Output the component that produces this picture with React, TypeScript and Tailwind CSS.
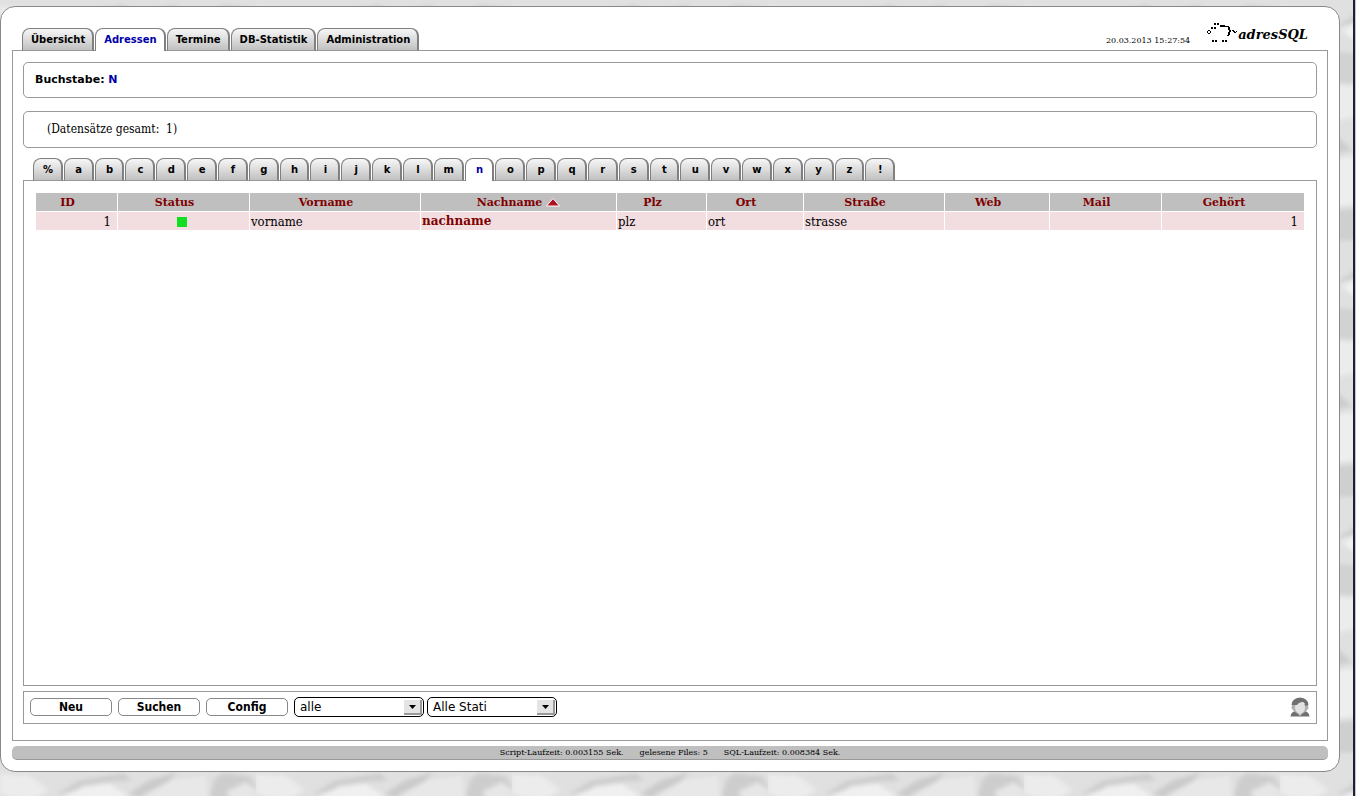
const mainTabs = ['Übersicht', 'Adressen', 'Termine', 'DB-Statistik', 'Administration'];
const letters = ['%', ...'abcdefghijklmnopqrstuvwxyz', '!'];

const columns = [
    { label: 'ID', width: 'w-[81px]' },
    { label: 'Status', width: 'w-[131px]' },
    { label: 'Vorname', width: 'w-[170px]' },
    { label: 'Nachname', width: 'w-[195px]' },
    { label: 'Plz', width: 'w-[89px]' },
    { label: 'Ort', width: 'w-[96px]' },
    { label: 'Straße', width: 'w-[140px]' },
    { label: 'Web', width: 'w-[104px]' },
    { label: 'Mail', width: 'w-[111px]' },
    { label: 'Gehört', width: 'w-[142px]' },
];

const sans = "font-['DejaVu_Sans',sans-serif]";
const sansCondensed = "font-['DejaVu_Sans_Condensed','DejaVu_Sans',sans-serif]";
const serif = "font-['DejaVu_Serif','Liberation_Serif',serif]";
const serifCondensed = "font-['DejaVu_Serif_Condensed','DejaVu_Serif',serif]";

const tabBase = 'block h-[23px] rounded-t-[8px] border border-r-2 border-[#808080] text-center text-[10px] leading-[22px] font-bold';
const tabIdle = 'border-b-[#999] bg-linear-to-b from-[#f4f4f4] from-5% via-[#dcdcdc] via-50% to-[#c0c0c0] text-black';
const tabActive = 'border-b-0 bg-white text-[#0000a8]';

// crumpled paper, one 256px tile
function Paper() {
    return (
        <svg className="absolute inset-0 h-full w-full" aria-hidden="true">
            <defs>
                <filter id="soft" x="-20%" y="-20%" width="140%" height="140%">
                    <feGaussianBlur stdDeviation="2" />
                </filter>
                <pattern id="paper" width="256" height="256" patternUnits="userSpaceOnUse">
                    <rect width="256" height="256" fill="#e0e0e1" />
                    <g filter="url(#soft)">
                        <path d="M0 6L30 8L48 22L30 34L0 26Z" fill="#ececec" />
                        <path d="M55 27L80 12L124 5L132 12L100 15L78 22Z" fill="#cecece" />
                        <path d="M62 30L84 18L110 16L128 28L120 50L80 46Z" fill="#f0f0f0" />
                        <path d="M128 26L150 12L178 4L168 14L140 30Z" fill="#cbcbcb" />
                        <path d="M142 28L172 12L206 8L208 30L180 46Z" fill="#e8e8e8" />
                        <path d="M209 32L214 12L222 5L250 8L256 20L240 34Z" fill="#cdcdcd" />
                        <path d="M226 24L246 14L256 22V40L238 44Z" fill="#e6e6e6" />
                        <path d="M0 40L60 52L110 58L70 84L20 78Z" fill="#d2d2d3" />
                        <path d="M24 82L76 86L120 66L110 110L50 122Z" fill="#ececed" />
                        <path d="M120 60L190 50L236 72L196 92L140 84Z" fill="#cfcfd0" />
                        <path d="M196 94L240 76L254 104L228 128L204 118Z" fill="#eeeeef" />
                        <path d="M0 98L44 124L72 150L30 160L0 140Z" fill="#cdcdce" />
                        <path d="M76 146L130 112L190 108L170 150L110 168Z" fill="#d5d5d6" />
                        <path d="M174 152L206 124L250 134L240 176L196 178Z" fill="#cbcbcc" />
                        <path d="M10 170L70 156L108 174L84 204L30 208Z" fill="#eeeeee" />
                        <path d="M112 176L168 158L196 184L160 214L118 204Z" fill="#e9e9ea" />
                        <path d="M200 184L246 180L254 212L220 232L196 216Z" fill="#ececec" />
                        <path d="M8 214L88 208L120 216L90 238L30 244Z" fill="#cfcfcf" />
                        <path d="M126 220L190 214L222 238L170 248Z" fill="#d0d0d0" />
                    </g>
                </pattern>
            </defs>
            <rect width="100%" height="100%" fill="url(#paper)" />
        </svg>
    );
}

function Logo() {
    return (
        <a href="#" className="flex items-start text-black">
            <svg width="32" height="22" viewBox="0 0 32 22" shapeRendering="crispEdges" aria-hidden="true">
                <path
                    fill="#000"
                    d="M8 1h2v2h-2zM11 1h2v2h-2zM14 3h5v1h2v1h-7zM5 5h2v2h-2zM8 5h2v2h-2zM2 8h2v1h-2zM1 9h1v2h-1zM4 9h1v2h-1zM2 11h2v1h-2zM21 4h2v1h1v3h1v2h-1v3h-1v1h-2v-1h1v-3h1v-2h-1v-3h-1zM26 8h2v1h1v1h1v-1h1v1h-1v1h-2v-1h-1v-1h-1zM6 18h2v2h-2zM9 18h2v2h-2zM16 18h2v2h-2zM19 18h2v2h-2z"
                />
            </svg>
            <span className={`${serif} pt-1 text-[13px] leading-[18px] font-bold italic`}>adresSQL</span>
        </a>
    );
}

function Person() {
    return (
        <svg width="20" height="20" viewBox="0 0 20 20" role="img" aria-label="Benutzer">
            <path d="M0.500 19.500 Q1 14.500 6 14 L14 14 Q19 14.500 19.500 19.500Z" fill="#707070" />
            <path d="M6 14 L10 19 L14 14 L12.500 11 H7.500Z" fill="#d4d4d4" />
            <path d="M3 7 Q0.500 10 2 12 Q4 15 8 17 L10 14 L12 17 Q16 15 18 12 Q19.500 10 17 7Z" fill="#b0b0b0" />
            <ellipse cx="10" cy="10.500" rx="5" ry="6" fill="#e2e2e2" />
            <path d="M1.500 8 Q2 1 10 0.500 Q18 1 18.500 8 L15.500 9 Q15 6 13 5 Q9 5 7 8 Q4.500 8 1.500 8Z" fill="#707070" />
        </svg>
    );
}

function Select({ label, option }: { label: string; option: string }) {
    return (
        <div className="relative">
            <select
                aria-label={label}
                className={`${sans} block h-5 w-[130px] appearance-none rounded-[5px] border border-black bg-white pl-[5px] text-[12px] leading-[18px] text-black`}
            >
                <option>{option}</option>
            </select>
            <span className="pointer-events-none absolute top-[3px] right-[2px] flex h-[15px] w-[18px] items-center justify-center border-r-2 border-b-2 border-[#999] bg-[#e4e4e4]">
                <svg width="7" height="4" viewBox="0 0 7 4" aria-hidden="true">
                    <path d="M0 0H7L3.500 4Z" fill="#000" />
                </svg>
            </span>
        </div>
    );
}

function AddressTable() {
    const td = 'bg-[#f2dde0] p-0 px-px pt-px';
    const number = 'bg-[#f2dde0] p-0 pt-px pr-[6px] text-right';

    return (
        <table className={`${serifCondensed} w-full table-fixed border-separate border-spacing-px text-[13px] text-black`}>
            <thead>
                <tr className="h-[18px]">
                    {columns.map((column) => (
                        <th key={column.label} className={`${column.width} ${serif} bg-[#bfbfbf] p-0 pt-px text-[11px] leading-[17px] font-bold`}>
                            <a href="#" className="flex items-center justify-center gap-1 text-[#800000]">
                                {column.label}
                                <svg width="14" height="9" viewBox="0 0 14 9" aria-hidden="true">
                                    {column.label === 'Nachname' && (
                                        <path d="M7 0.500L13.500 8H0.500Z" fill="#b01020" stroke="#fff" strokeWidth="1" />
                                    )}
                                </svg>
                            </a>
                        </th>
                    ))}
                </tr>
            </thead>
            <tbody>
                <tr className="h-[18px] leading-[17px]">
                    <td className={number}>1</td>
                    <td className={`${td} pr-[5px]`}>
                        <span className="mx-auto block size-[10px] bg-[#10e020]" />
                    </td>
                    <td className={td}>vorname</td>
                    <td className={`${td} ${serif} text-[12px] font-bold text-[#800000]`}>nachname</td>
                    <td className={td}>plz</td>
                    <td className={td}>ort</td>
                    <td className={td}>strasse</td>
                    <td className={td} />
                    <td className={td} />
                    <td className={number}>1</td>
                </tr>
            </tbody>
        </table>
    );
}

export default function App() {
    const button = `${sansCondensed} h-[18px] w-[82px] rounded-[5px] border border-[#888] bg-white text-[12px] leading-[16px] font-bold text-black`;

    return (
        <div className="relative flex min-h-screen flex-col text-black">
            <Paper />
            <div className="absolute inset-y-0 right-0 w-[3px] border-l-2 border-[#1c2233] bg-[#c4c4d0]" />

            <div className="relative mt-[6px] mr-4 mb-6 flex flex-1 flex-col rounded-[15px] border border-[#888] bg-white px-[11px] pt-[21px] pb-[11px]">
                <header className="flex h-[22px] items-start justify-between pr-5 pl-[10px]">
                    <nav className="flex gap-px">
                        {mainTabs.map((tab) => (
                            <a key={tab} href="#" className={`${sans} ${tabBase} relative pr-[7px] pl-2 ${tab === 'Adressen' ? tabActive : tabIdle}`}>
                                {tab}
                            </a>
                        ))}
                    </nav>
                    <div className="-mt-[6px] flex items-start gap-4">
                        <time className={`${serif} pt-[13px] text-[8px] leading-[12px]`}>20.03.2013 15:27:54</time>
                        <Logo />
                    </div>
                </header>

                <main className="flex flex-1 flex-col border border-[#999] px-[10px] pt-[11px] pb-4">
                    <div className={`${sans} h-9 rounded-[5px] border border-[#999] px-[11px] text-[11px] leading-[34px] font-bold`}>
                        Buchstabe: <span className="text-[#0000a8]">N</span>
                    </div>

                    <div className={`${serifCondensed} mt-[13px] h-[37px] rounded-[5px] border border-[#999] px-[23px] text-[12px] leading-[35px]`}>
                        (Datensätze gesamt: &nbsp;1)
                    </div>

                    <nav className="mt-[10px] ml-[10px] flex h-[22px] w-[862px] gap-px">
                        {letters.map((letter) => (
                            <a key={letter} href="#" className={`${sans} ${tabBase} relative flex-1 pl-px ${letter === 'n' ? tabActive : tabIdle}`}>
                                {letter}
                            </a>
                        ))}
                    </nav>
                    <section className="flex-1 border border-[#999] p-[11px]">
                        <AddressTable />
                    </section>

                    <div className="mt-[5px] flex h-[33px] items-center border border-[#999] px-[6px] pb-px">
                        <div className="flex gap-[6px]">
                            <button type="button" className={button}>Neu</button>
                            <button type="button" className={button}>Suchen</button>
                            <button type="button" className={button}>Config</button>
                        </div>
                        <div className="ml-[6px] flex gap-[3px]">
                            <Select label="Gruppe" option="alle" />
                            <Select label="Status" option="Alle Stati" />
                        </div>
                        <a href="#" className="ml-auto">
                            <Person />
                        </a>
                    </div>
                </main>

                <footer className={`${serif} mt-[5px] flex h-[14px] justify-center gap-4 rounded-[5px] border-b border-[#999] bg-[#bfbfbf] text-[8px] leading-[14px]`}>
                    <span>Script-Laufzeit: 0.003155 Sek.</span>
                    <span>gelesene Files: 5</span>
                    <span>SQL-Laufzeit: 0.008384 Sek.</span>
                </footer>
            </div>
        </div>
    );
}
